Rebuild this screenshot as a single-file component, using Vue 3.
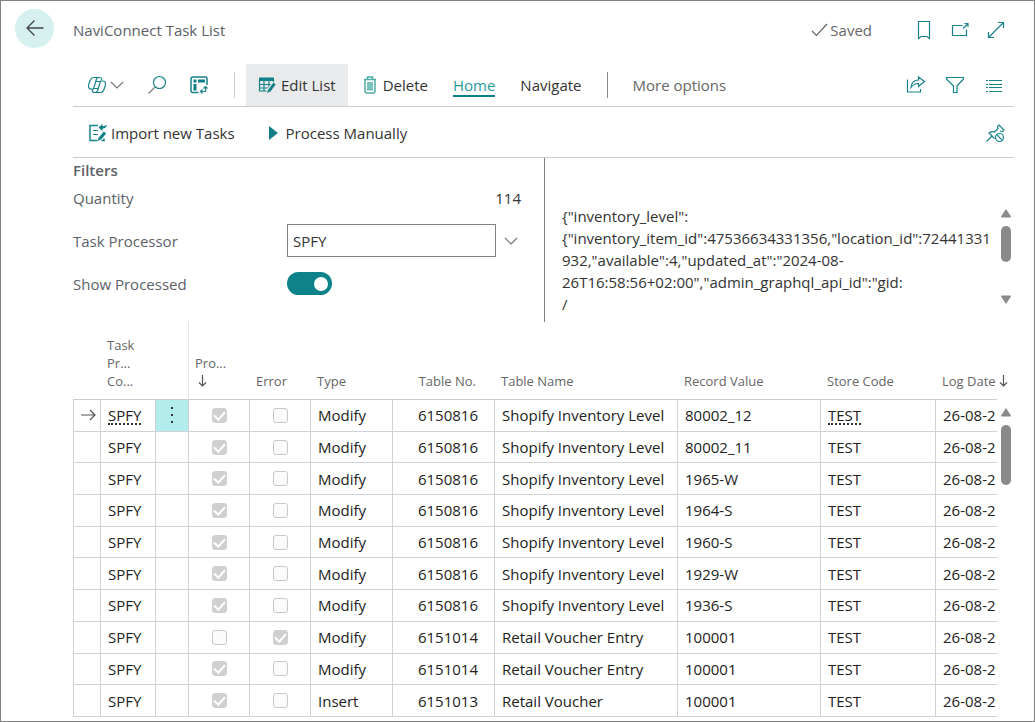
<script setup>
import { ref } from 'vue'

const processor = ref('SPFY')
const showProcessed = ref(true)

const payload = [
  '{"inventory_level":',
  '{"inventory_item_id":47536634331356,"location_id":72441331',
  '932,"available":4,"updated_at":"2024-08-',
  '26T16:58:56+02:00","admin_graphql_api_id":"gid:',
  '/'
].join('\n')

const shopify = (record) => ({
  done: true, error: false, type: 'Modify', no: '6150816', name: 'Shopify Inventory Level', record
})

const rows = [
  shopify('80002_12'),
  shopify('80002_11'),
  shopify('1965-W'),
  shopify('1964-S'),
  shopify('1960-S'),
  shopify('1929-W'),
  shopify('1936-S'),
  { done: false, error: true, type: 'Modify', no: '6151014', name: 'Retail Voucher Entry', record: '100001' },
  { done: true, error: false, type: 'Modify', no: '6151014', name: 'Retail Voucher Entry', record: '100001' },
  { done: true, error: false, type: 'Insert', no: '6151013', name: 'Retail Voucher', record: '100001' }
]
</script>

<template>
  <div class="page">
    <header class="head">
      <button class="back" aria-label="Back">
        <svg width="20" height="18" viewBox="0 0 20 18"><path d="M18.500 9H2M9.500 1.500L2 9l7.500 7.500" /></svg>
      </button>
      <h1>NaviConnect Task List</h1>
      <span class="saved">
        <svg width="17" height="14" viewBox="0 0 17 14"><path d="M1 8l4.500 4.500L16 1" /></svg>Saved
      </span>
      <div class="head-icons">
        <button aria-label="Bookmark">
          <svg width="20" height="20" viewBox="0 0 20 20"><path d="M4.500 1.500h11v17L13 16.500H7l-2.500 2z" /></svg>
        </button>
        <button aria-label="Open in new window">
          <svg width="20" height="20" viewBox="0 0 20 20"><path d="M12.500 5.500H2.500v10h14V9.500M13 8.500L18 3.500M14.500 3.500H18V7" /></svg>
        </button>
        <button aria-label="Expand">
          <svg width="20" height="20" viewBox="0 0 20 20"><path d="M2.500 17.500L17.500 2.500M12 2.500h5.500V8M2.500 12v5.500H8" /></svg>
        </button>
      </div>
    </header>

    <main class="body">
      <nav class="bar">
        <button class="copilot" aria-label="Copilot">
          <svg width="20" height="20" viewBox="0 0 20 20">
            <path d="M6.500 2.500h6.500c1.500 0 1.500 1 2 2.500M6.500 2.500C4 2.500 3 5 2 8.500S1.500 14 4 14h2.500L9.500 4c.5-1.500 1.500-1.500 2.500-1.500M13.500 17.500H7c-1.500 0-1.500-1-2-3M13.500 17.500c2.500 0 3.500-2.500 4.500-6S18.500 6 16 6h-2.500l-3 10c-.5 1.500-1.500 1.500-2.500 1.500M8.500 6.500h5.500M6.500 13.500h5" />
          </svg>
          <svg class="grey" width="14" height="8" viewBox="0 0 14 8"><path d="M1 1l6 6 6-6" /></svg>
        </button>
        <button class="search" aria-label="Search">
          <svg width="20" height="20" viewBox="0 0 20 20"><circle cx="12.500" cy="7.500" r="6" /><path class="grey-line" d="M8.200 11.800L1.500 18.500" /></svg>
        </button>
        <button class="analyse" aria-label="Analyse">
          <svg width="20" height="20" viewBox="0 0 20 20">
            <path class="frame" d="M9.500 17.500H4A2 2 0 0 1 2 15.500V4A2 2 0 0 1 4 2h12a2 2 0 0 1 2 2v6" />
            <path class="fill" d="M4.500 4.500h3v3h-3zM9 4.500h7v3H9zM4.500 9h3v6.500h-3z" />
            <path d="M16.500 11.500v5h-5M14.500 13.500l2-2 2 2M13.500 14.500l-2 2 2 2" />
          </svg>
        </button>
        <span class="sep light"></span>
        <button class="edit">
          <svg width="18" height="18" viewBox="0 0 18 18">
            <path class="fill" d="M1 1.500h15v3.500H1z" />
            <path d="M1.500 4v11H9M1.500 8.500H14M1.500 12h9M6 4v11M11 4v9M15.500 4v3" />
            <path class="halo" d="M17 7l-7 9" />
            <path class="pen" d="M16.500 7.500l-5 7" /><path class="fill" d="M10.300 13.300l2.500 2-3.800 1.700z" />
          </svg>Edit List
        </button>
        <button class="delete">
          <svg width="14" height="18" viewBox="0 0 14 18">
            <path class="soft" d="M1 3.500h12M4.500 3V1h5v2M2 3.500V15a2 2 0 0 0 2 2h6a2 2 0 0 0 2-2V3.500" /><path class="soft-fill" d="M4 6h6v8.500H4z" />
          </svg>Delete
        </button>
        <a class="tab active" href="#home">Home</a>
        <a class="tab" href="#navigate">Navigate</a>
        <span class="sep"></span>
        <button class="more">More options</button>
        <div class="bar-icons">
          <button aria-label="Share">
            <svg width="20" height="20" viewBox="0 0 20 20"><path d="M1.500 4.500v12.500h13V14M12.500 2l6 4.500-6 5V8.500C9 8.500 7 9.500 5 12.500c0-4.500 3-7.500 7.500-7.500z" /></svg>
          </button>
          <button aria-label="Filter">
            <svg width="20" height="20" viewBox="0 0 20 20"><path d="M1.500 2.500h17v1.500L12 11v6.500H8.500V11L1.500 4z" /></svg>
          </button>
          <button aria-label="Show as list">
            <svg width="20" height="20" viewBox="0 0 20 20"><path d="M2 5.500h2M5 5.500h13M2 9.500h2M5 9.500h13M2 12.500h2M5 12.500h13M2 16.500h2M5 16.500h13" /></svg>
          </button>
        </div>
      </nav>

      <div class="bar actions">
        <button class="import">
          <svg width="20" height="20" viewBox="0 0 20 20">
            <path class="frame" d="M10 2.500H2V17.500h7.500M16 15.500v2h-2.500" /><path d="M5 7.500h5M5 11.500h5" />
            <path class="fill" d="M10.500 4.500L14.500 1v2.200c2 0 3.500-.7 4.500-1.700-.3 2.500-2 4-4.500 4.200V8z" />
            <path class="pen" d="M17 9.500l-5 6" /><path class="fill" d="M10.800 14.300l2.500 2-3.800 1.700z" />
          </svg>Import new Tasks
        </button>
        <button class="process">
          <svg width="10" height="14" viewBox="0 0 10 14"><path class="fill" d="M1 0l9 7-9 7z" /></svg>Process Manually
        </button>
        <button class="pin" aria-label="Unpin">
          <svg width="20" height="20" viewBox="0 0 20 20">
            <path d="M1.500 18.500L7 13M9.500 15.500L4 10c2-1.500 4-1.500 5.500-1L13 5.500l-.5-2L14 2l5 5-1.500 1.500L15 8" /><circle cx="14.500" cy="14.500" r="4" /><path d="M11.700 11.700l5.600 5.600" />
          </svg>
        </button>
      </div>

      <section class="top">
        <form class="filters" @submit.prevent>
          <h2>Filters</h2>
          <div class="field short">
            <span class="label">Quantity</span><output>114</output>
          </div>
          <div class="field">
            <label for="processor">Task Processor</label>
            <input id="processor" v-model="processor" type="text">
            <button class="lookup" aria-label="Choose a value">
              <svg class="grey" width="14" height="8" viewBox="0 0 14 8"><path d="M1 1l6 6 6-6" /></svg>
            </button>
          </div>
          <div class="field">
            <label for="shown">Show Processed</label>
            <input id="shown" v-model="showProcessed" class="toggle" type="checkbox" role="switch">
          </div>
        </form>
        <div class="detail">
          <textarea readonly rows="5" aria-label="Task data" :value="payload"></textarea>
          <div class="scroll">
            <svg width="10" height="9" viewBox="0 0 10 9"><path d="M5 0l5 7.500q0 1-1 1H1q-1 0-1-1z" /></svg>
            <span class="thumb"></span>
            <svg class="down" width="10" height="9" viewBox="0 0 10 9"><path d="M5 9l5-7.500q0-1-1-1H1q-1 0-1 1z" /></svg>
          </div>
        </div>
      </section>

      <section class="list">
        <table>
          <colgroup>
            <col class="c-mark"><col class="c-code"><col class="c-menu"><col class="c-done"><col class="c-error"><col class="c-type">
            <col class="c-no"><col class="c-name"><col class="c-record"><col class="c-store"><col>
          </colgroup>
          <thead>
            <tr>
              <th></th>
              <th>Task<br>Pr...<br>Co...</th>
              <th></th>
              <th class="edge">Pro...<br><svg class="sort" width="9" height="12" viewBox="0 0 9 12"><path d="M4.500 0v11M1 7.500L4.500 11 8 7.500" /></svg></th>
              <th>Error</th>
              <th>Type</th>
              <th class="num">Table No.</th>
              <th>Table Name</th>
              <th>Record Value</th>
              <th>Store Code</th>
              <th>Log Date <svg class="sort" width="9" height="12" viewBox="0 0 9 12"><path d="M4.500 0v11M1 7.500L4.500 11 8 7.500" /></svg></th>
            </tr>
          </thead>
          <tbody>
            <tr v-for="(row, i) in rows" :key="i">
              <td class="mark"><svg v-if="i === 0" width="15" height="12" viewBox="0 0 15 12"><path d="M0 6h14M9 1l5 5-5 5" /></svg></td>
              <td><a v-if="i === 0" href="#processor">SPFY</a><template v-else>SPFY</template></td>
              <td :class="{ menu: i === 0 }">
                <button v-if="i === 0" aria-label="Row actions"><svg width="4" height="18" viewBox="0 0 4 18"><path d="M1 1h2v2H1zM1 8h2v2H1zM1 15h2v2H1z" /></svg></button>
              </td>
              <td class="check"><input type="checkbox" disabled aria-label="Processed" :checked="row.done"></td>
              <td class="check"><input type="checkbox" disabled aria-label="Error" :checked="row.error"></td>
              <td>{{ row.type }}</td>
              <td class="num">{{ row.no }}</td>
              <td>{{ row.name }}</td>
              <td>{{ row.record }}</td>
              <td><a v-if="i === 0" href="#store">TEST</a><template v-else>TEST</template></td>
              <td>26-08-2</td>
            </tr>
          </tbody>
        </table>
        <div class="scroll">
          <svg width="10" height="9" viewBox="0 0 10 9"><path d="M5 0l5 7.500q0 1-1 1H1q-1 0-1-1z" /></svg>
          <span class="thumb tall"></span>
        </div>
      </section>
    </main>
  </div>
</template>

<style>
body { margin: 0; background: #fff; }
</style>

<style scoped>
.page, .page * { box-sizing: border-box; }
.page {
  display: flex; flex-direction: column; height: 100vh; min-height: 600px;
  border: 1px solid #808080; overflow: hidden;
  font: 15px/20px "Open Sans", "Noto Sans", sans-serif; color: #333;
}
button, input, textarea { font: inherit; color: inherit; margin: 0; padding: 0; border: 0; background: none; }
button { display: flex; align-items: center; white-space: nowrap; flex: none; }
a { color: inherit; text-decoration: none; }
svg { display: block; flex: none; fill: none; stroke: #17828a; stroke-width: 1.2; }
.grey, .grey-line { stroke: #777; }
.frame { stroke-width: 1.5; }
.fill { fill: #0e7f88; stroke: none; }
.pen { stroke: #0e7f88; stroke-width: 3; }
.halo { stroke: #e9eaeb; stroke-width: 5; }
.soft { stroke: #4fada9; stroke-width: 1.5; }
.soft-fill { fill: #77c2bd; stroke: none; }

.head { display: flex; align-items: center; height: 57px; padding: 0 28px 0 14px; flex: none; }
.back { width: 39px; height: 39px; border-radius: 50%; background: #d6f0f0; justify-content: center; margin-bottom: 3px; }
.back svg { stroke: #444; stroke-width: 1.3; }
h1 { font-size: 15px; font-weight: 400; margin: 0 auto 0 19px; color: #5c6168; }
.saved { display: flex; align-items: center; gap: 2px; color: #666; }
.saved svg { stroke: #666; }
.head-icons, .bar-icons { display: flex; gap: 16px; }
.head-icons { margin-left: 42px; }

.body { flex: 1; min-height: 0; display: flex; flex-direction: column; padding: 6px 20px 4px 72px; }
.bar { display: flex; align-items: center; height: 43px; flex: none; border-bottom: 1px solid #ccc; }
.copilot { gap: 3px; margin-left: 14px; }
.search { margin-left: 23px; }
.analyse { margin-left: 22px; }
.sep { width: 1px; height: 26px; background: #888; margin: 0 25px; flex: none; }
.sep.light { background: #ccc; margin: 0 11px 0 25px; }
.edit { align-self: stretch; gap: 5px; padding: 0 12px; background: #e9eaeb; }
.delete { gap: 6px; margin-left: 15px; }
.tab { margin-left: 25px; line-height: 20px; border-bottom: 2px solid transparent; padding-top: 2px; }
.active { color: #2a9a97; border-color: #0e7f88; }
.more { color: #666; }
.bar-icons { margin-left: auto; gap: 19px; padding-right: 10px; }
.actions { height: 51px; padding-top: 1px; }
.import { margin-left: 15px; gap: 3px; }
.process { margin-left: 33px; gap: 8px; }
.pin { margin-left: auto; margin-right: 9px; }

.top { display: grid; grid-template-columns: 1fr 1fr; height: 164px; flex: none; }
.filters { padding: 2px 23px 0 0; border-right: 1px solid #808080; color: #5c6168; }
h2 { font-size: 15px; font-weight: 600; line-height: 20px; margin: 0; }
.field { display: flex; align-items: center; height: 43px; }
.field.short { height: 39px; padding-bottom: 4px; }
.field label, .label { width: 214px; flex: none; }
output { margin-left: auto; color: #333; }
.field input[type="text"] { flex: 1; min-width: 0; height: 33px; border: 1px solid #808080; padding: 0 5px; color: #333; }
.lookup { width: 25px; padding-left: 8px; }
.toggle { appearance: none; width: 45px; height: 23px; border-radius: 12px; background: #aaa; display: flex; align-items: center; padding: 0 4px; }
.toggle:checked { background: #0e8289; justify-content: flex-end; }
.toggle::before { content: ""; width: 14px; height: 14px; border-radius: 50%; background: #fff; }
.detail { display: flex; padding: 48px 3px 6px 17px; min-width: 0; }
textarea { flex: 1; min-width: 0; resize: none; overflow: hidden; white-space: pre; line-height: 22px; outline: 0; margin-top: -1px; }
.scroll { display: flex; flex-direction: column; align-items: center; width: 10px; padding: 3px 0 12px; flex: none; }
.scroll svg { fill: #8a8a8a; stroke: none; }
.thumb { width: 10px; height: 36px; border-radius: 5px; background: #8a8a8a; margin-top: 8px; }
.thumb.tall { height: 60px; }
.scroll .down { margin-top: auto; }

.list { flex: 1; min-height: 0; display: flex; }
table { flex: 1; min-width: 0; width: 100%; height: 100%; table-layout: fixed; border-collapse: separate; border-spacing: 0; }
.list .scroll { padding-top: 86px; margin: 0 3px 0 4px; }
.c-mark { width: 27px; }
.c-code { width: 55px; }
.c-menu { width: 33px; }
.c-done { width: 61px; }
.c-error { width: 61px; }
.c-type { width: 82px; }
.c-no { width: 102px; }
.c-name { width: 183px; }
.c-record { width: 143px; }
.c-store { width: 115px; }
thead tr { height: 78px; }
th { font-size: 13px; line-height: 18px; font-weight: 400; text-align: left; vertical-align: bottom; white-space: nowrap; color: #666; padding: 0 0 9px 7px; border-bottom: 1px solid #ccc; }
th.edge { border-left: 1px solid #e4e6e8; padding-left: 6px; }
th.num { padding-right: 18px; }
.num { text-align: right; }
.sort { display: inline-block; stroke: #555; vertical-align: -1px; }
.edge .sort { margin-left: 3px; }
td { padding: 0 0 0 7px; border-left: 1px solid #cfd3d6; border-bottom: 1px solid #cfd3d6; white-space: nowrap; overflow: hidden; color: #222; }
td.num { padding-right: 16px; }
td a { border-bottom: 2px dotted #333; display: inline-block; line-height: 16px; }
.mark svg { stroke: #555; }
.menu { background: #b3ecec; }
.menu button { width: 100%; justify-content: center; padding-right: 7px; }
.menu svg { fill: #333; stroke: none; }
td.check { padding: 0; }
.check input { appearance: none; display: grid; place-items: center; width: 15px; height: 15px; margin: 0 auto; border: 1px solid #c8c8c8; border-radius: 3px; background: #fbfbfb; }
.check input:checked { background: #d0d0d0; border-color: #d0d0d0; }
.check input:checked::before { content: ""; width: 5px; height: 9px; margin-bottom: 2px; border: solid #fff; border-width: 0 2px 2px 0; transform: rotate(42deg); }
</style>
